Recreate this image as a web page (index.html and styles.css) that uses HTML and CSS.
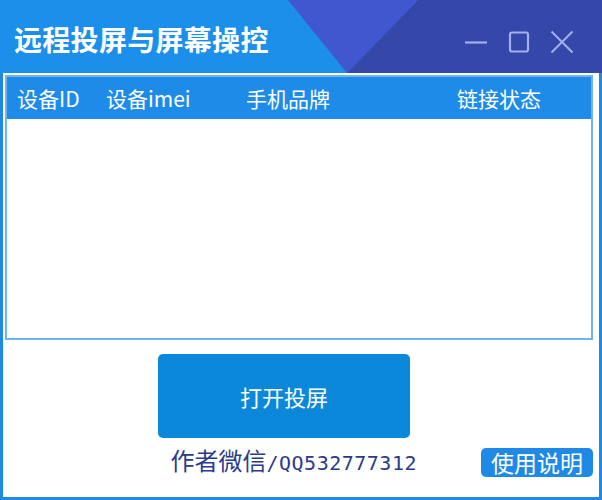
FILE: index.html
```html
<!DOCTYPE html>
<html lang="zh">
<head>
<meta charset="utf-8">
<title>远程投屏与屏幕操控</title>
<link rel="stylesheet" href="styles.css">
</head>
<body>
<div class="window">
  <header class="titlebar">
    <h1 class="title">远程投屏与屏幕操控</h1>
    <div class="controls">
      <svg class="ctl" width="24" height="24" viewBox="0 0 24 24"><path d="M1 12.5H23" stroke="currentColor" stroke-width="2.2" fill="none"/></svg>
      <svg class="ctl" width="24" height="24" viewBox="0 0 24 24"><rect x="3" y="2.5" width="18" height="19" rx="2" stroke="currentColor" stroke-width="2.2" fill="none"/></svg>
      <svg class="ctl" width="24" height="24" viewBox="0 0 24 24"><path d="M1.5 1.5L22.5 22.5M22.5 1.5L1.5 22.5" stroke="currentColor" stroke-width="2" fill="none"/></svg>
    </div>
  </header>
  <main class="body">
    <section class="table">
      <div class="thead">
        <span class="col c1">设备ID</span>
        <span class="col c2">设备imei</span>
        <span class="col c3">手机品牌</span>
        <span class="col c4">链接状态</span>
      </div>
      <div class="tbody"></div>
    </section>
    <div class="actions">
      <button class="primary">打开投屏</button>
    </div>
    <footer class="footer">
      <span class="author"><span class="cn">作者微信</span><span class="mono">/QQ532777312</span></span>
      <button class="help">使用说明</button>
    </footer>
  </main>
</div>
</body>
</html>
```

FILE: styles.css
```css
* { box-sizing: border-box; }
html, body { margin: 0; padding: 0; background: #ffffff; }
body { font-family: "Noto Sans CJK SC", "Noto Sans", sans-serif; }

.window {
  width: 602px;
  height: 500px;
  display: flex;
  flex-direction: column;
  background: #ffffff;
}

.titlebar {
  position: relative;
  height: 73px;
  flex: none;
  background: #1b8fe9;
  display: flex;
  align-items: center;
  justify-content: space-between;
  padding: 0 28px 0 14px;
  overflow: hidden;
}
.titlebar::before {
  content: "";
  position: absolute;
  inset: 0;
  background: #4157cf;
  clip-path: polygon(288px 0, 418px 0, 347px 73px);
}
.titlebar::after {
  content: "";
  position: absolute;
  inset: 0;
  background: #3547a8;
  clip-path: polygon(418px 0, 602px 0, 602px 73px, 347px 73px);
}
.title {
  position: relative;
  z-index: 1;
  margin: 0;
  color: #ffffff;
  font-size: 28px;
  font-weight: 700;
  line-height: 1;
  letter-spacing: 0.3px;
  margin-top: 4px;
}
.controls {
  position: relative;
  z-index: 1;
  display: flex;
  gap: 19px;
  color: #a2b0ee;
  margin-top: 10px;
}
.ctl { display: block; }

.body {
  flex: 1;
  display: flex;
  flex-direction: column;
  border: 3px solid #1f8ae6;
  border-top: none;
  padding: 2px 6px 0 2px;
}

.table {
  height: 265px;
  border: 2px solid #6fb4ee;
  display: flex;
  flex-direction: column;
}
.thead {
  height: 42px;
  background: #1e8be8;
  display: flex;
  align-items: center;
  color: #ffffff;
  font-size: 21px;
  padding-left: 10px;
}
.col { flex: none; white-space: nowrap; }
.c1 { width: 89px; }
.c2 { width: 140px; }
.c3 { width: 211px; }
.tbody { flex: 1; background: #ffffff; }

.actions {
  display: flex;
  justify-content: center;
  padding-top: 14px;
  padding-right: 30px;
}
.primary {
  width: 252px;
  height: 84px;
  border: none;
  border-radius: 5px;
  background: #0b88d9;
  color: #ffffff;
  font-family: "Noto Sans CJK SC", sans-serif;
  font-size: 22px;
  padding: 0;
}

.footer {
  display: flex;
  align-items: center;
  justify-content: flex-end;
  padding-top: 6px;
}
.author {
  color: #2b3b8c;
  display: flex;
  align-items: baseline;
  margin-right: 64px;
  margin-top: -2px;
}
.cn { font-size: 24px; }
.mono {
  font-family: "DejaVu Sans Mono", "Liberation Mono", monospace;
  font-size: 20px;
  letter-spacing: 0.5px;
}
.help {
  width: 112px;
  height: 29px;
  border: none;
  border-radius: 5px;
  background: #1f8ae6;
  color: #ffffff;
  font-family: "Noto Sans CJK SC", sans-serif;
  font-size: 23px;
  line-height: 1;
  padding: 0;
  margin-top: 4px;
}
```
